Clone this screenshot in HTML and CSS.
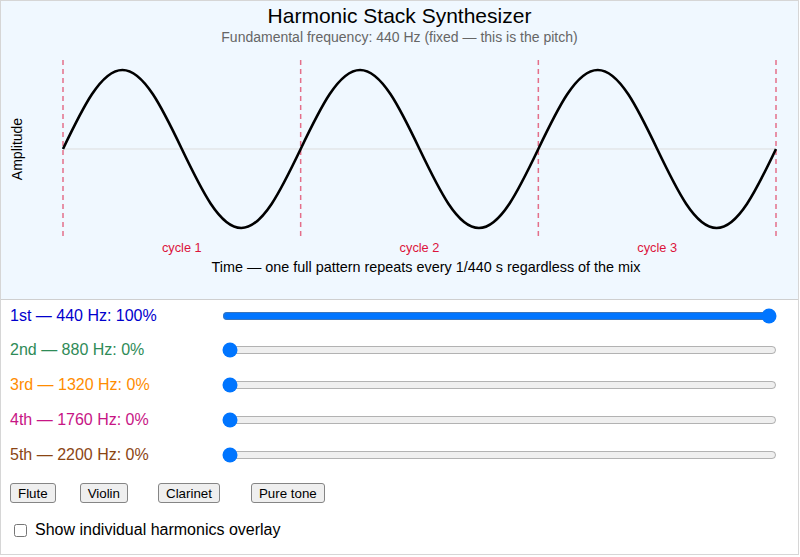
FILE: index.html
```html
<!DOCTYPE html>
<html>
<head>
<meta charset="utf-8">
<link rel="stylesheet" href="styles.css">
</head>
<body>
<div class="app">
  <div class="panel">
    <div class="title">Harmonic Stack Synthesizer</div>
    <div class="subtitle">Fundamental frequency: 440 Hz (fixed — this is the pitch)</div>
    <svg class="plot" width="797" height="253" viewBox="0 0 797 253">
      <line class="zero" x1="62" y1="103" x2="775" y2="103"/>
      <line class="cyc" x1="62" y1="14" x2="62" y2="191"/>
      <line class="cyc" x1="299.67" y1="14" x2="299.67" y2="191"/>
      <line class="cyc" x1="537.33" y1="14" x2="537.33" y2="191"/>
      <line class="cyc" x1="775" y1="14" x2="775" y2="191"/>
      <path class="wave" d="M62,103 C81.38,62.53 99.91,24 121.42,24 S161.45,62.53 180.83,103 S218.74,182 240.25,182 S280.29,143.47 299.67,103 S337.57,24 359.08,24 S399.12,62.53 418.5,103 S456.41,182 477.92,182 S517.95,143.47 537.33,103 S575.24,24 596.75,24 S636.79,62.53 656.17,103 S694.07,182 715.58,182 S755.62,143.47 775,103"/>
      <text class="cyc-label" x="180.83" y="206">cycle 1</text>
      <text class="cyc-label" x="418.5" y="206">cycle 2</text>
      <text class="cyc-label" x="656.17" y="206">cycle 3</text>
      <text class="axis-label time-label" x="425" y="226">Time — one full pattern repeats every 1/440 s regardless of the mix</text>
      <text class="axis-label" transform="translate(21 103) rotate(-90)" x="0" y="0">Amplitude</text>
    </svg>
  </div>
  <div class="controls">
    <div class="row">
      <label class="lbl h1">1st — 440 Hz: 100%</label>
      <input class="slider" type="range" min="0" max="100" value="100">
    </div>
    <div class="row">
      <label class="lbl h2">2nd — 880 Hz: 0%</label>
      <input class="slider" type="range" min="0" max="100" value="0">
    </div>
    <div class="row">
      <label class="lbl h3">3rd — 1320 Hz: 0%</label>
      <input class="slider" type="range" min="0" max="100" value="0">
    </div>
    <div class="row">
      <label class="lbl h4">4th — 1760 Hz: 0%</label>
      <input class="slider" type="range" min="0" max="100" value="0">
    </div>
    <div class="row">
      <label class="lbl h5">5th — 2200 Hz: 0%</label>
      <input class="slider" type="range" min="0" max="100" value="0">
    </div>
  </div>
  <div class="presets">
    <button class="btn">Flute</button>
    <button class="btn btn-violin">Violin</button>
    <button class="btn btn-clarinet">Clarinet</button>
    <button class="btn btn-pure">Pure tone</button>
  </div>
  <div class="overlay">
    <input class="check" type="checkbox" id="ov">
    <label class="check-label" for="ov">Show individual harmonics overlay</label>
  </div>
</div>
</body>
</html>
```
FILE: styles.css
```css
html, body {
  margin: 0;
  padding: 0;
  background: #ffffff;
}
body {
  font-family: "Liberation Sans", Arial, sans-serif;
  color: #000;
}
.app {
  box-sizing: border-box;
  width: 799px;
  height: 555px;
  border: 1px solid #d6d6d6;
}
.panel {
  background: #f0f8ff;
  border-bottom: 1px solid #cfcfcf;
  padding-top: 3px;
}
.title {
  font-size: 21px;
  line-height: 24px;
  text-align: center;
}
.subtitle {
  font-size: 14px;
  line-height: 18px;
  color: #666;
  text-align: center;
}
.plot {
  display: block;
}
.zero {
  stroke: #dddddd;
  stroke-width: 1;
}
.cyc {
  stroke: crimson;
  stroke-opacity: 0.6;
  stroke-width: 1.5;
  stroke-dasharray: 5 4;
}
.wave {
  fill: none;
  stroke: #000;
  stroke-width: 2.6;
}
.cyc-label {
  font-family: "Liberation Sans", Arial, sans-serif;
  font-size: 12.8px;
  fill: crimson;
  text-anchor: middle;
}
.axis-label {
  font-family: "Liberation Sans", Arial, sans-serif;
  font-size: 14px;
  fill: #000;
  text-anchor: middle;
}
.time-label {
  font-size: 14.4px;
}
.controls {
  display: flex;
  flex-direction: column;
  gap: 13.75px;
  padding: 5px 0 0 9px;
}
.row {
  display: flex;
  align-items: center;
  height: 21px;
}
.lbl {
  width: 211px;
  font-size: 16px;
  line-height: 18px;
}
.h1 { color: #0000cd; }
.h2 { color: #2e8b57; }
.h3 { color: #ff8c00; }
.h4 { color: #c71585; }
.h5 { color: #8b4513; }
.slider {
  width: 555px;
  margin: 0 0 0 1px;
}
.presets {
  display: flex;
  padding: 18px 0 0 9px;
}
.btn {
  font-family: "Liberation Sans", Arial, sans-serif;
  font-size: 13.333px;
  height: 20px;
  padding: 0 7px;
  background: #efefef;
  border: 1px solid #858585;
  border-radius: 3px;
  color: #000;
}
.btn-violin { margin-left: 24px; }
.btn-clarinet { margin-left: 30px; }
.btn-pure { margin-left: 31px; }
.overlay {
  display: flex;
  align-items: center;
  height: 18px;
  margin-top: 18px;
  padding-left: 9px;
}
.check {
  width: 13px;
  height: 13px;
  margin: 0 8px 0 4px;
}
.check-label {
  font-size: 16px;
  line-height: 18px;
}
```
